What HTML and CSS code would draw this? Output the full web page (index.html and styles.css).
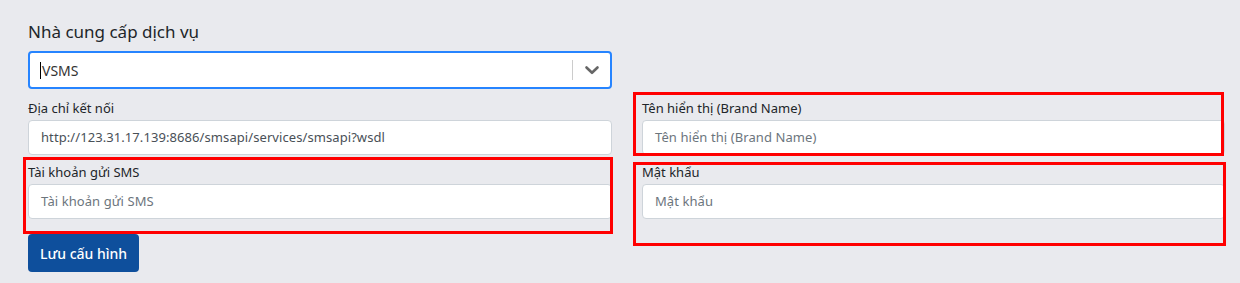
FILE: index.html
```html
<!DOCTYPE html>
<html>
<head>
<meta charset="UTF-8" />
<title>Cấu hình SMS</title>
<link rel="stylesheet" href="styles.css">
</head>
<body>
<div class="page">
  <div class="title">Nhà cung cấp dịch vụ</div>
  <div class="select">
    <div class="select-value"><span class="caret"></span>VSMS</div>
    <div class="select-sep"></div>
    <div class="select-arrow">
      <svg width="20" height="20" viewBox="0 0 20 20"><path d="M4.5 7.5 L10 12.8 L15.5 7.5" fill="none" stroke="#666" stroke-width="2.6" stroke-linecap="round" stroke-linejoin="round"/></svg>
    </div>
  </div>

  <div class="grid">
    <div class="field">
      <label>Địa chỉ kết nối</label>
      <div class="input">http://123.31.17.139:8686/smsapi/services/smsapi?wsdl</div>
    </div>
    <div class="field">
      <label>Tên hiển thị (Brand Name)</label>
      <div class="input placeholder">Tên hiển thị (Brand Name)</div>
    </div>
    <div class="field">
      <label>Tài khoản gửi SMS</label>
      <div class="input placeholder">Tài khoản gửi SMS</div>
    </div>
    <div class="field">
      <label>Mật khẩu</label>
      <div class="input placeholder">Mật khẩu</div>
    </div>
  </div>

  <button class="btn">Lưu cấu hình</button>

  <!-- red annotation boxes -->
  <div class="mark mark-account"></div>
  <div class="mark mark-brand"></div>
  <div class="mark mark-pass"></div>
</div>
</body>
</html>
```

FILE: styles.css
```css
body {
	margin:0;
	background-color:#e9eaee;
	font-family:"Noto Sans", "Open Sans", sans-serif;
	color:#212529;
}

.page
{
	position:relative;
	height:283px;
	padding:20px 0 0 28px;
	box-sizing:border-box;
}

.title
{
	font-size:17px;
	line-height:24px;
	margin-bottom:7px;
}

.select
{
	width:584px;
	height:38px;
	box-sizing:border-box;
	border:2px solid #2684ff;
	border-radius:4px;
	background:#fff;
	display:flex;
	align-items:center;
}

.select-value
{
	flex:1;
	padding-left:10px;
	font-size:14px;
	color:#333;
	display:flex;
	align-items:center;
}

.caret
{
	width:1px;
	height:17px;
	background:#000;
	margin-right:1px;
}

.select-sep
{
	width:1px;
	height:20px;
	background:#ccc;
}

.select-arrow
{
	width:37px;
	display:flex;
	justify-content:center;
	align-items:center;
}

.grid
{
	display:grid;
	grid-template-columns:584px 583px;
	column-gap:30px;
	row-gap:8px;
	margin-top:10px;
}

.field label
{
	display:block;
	font-size:13px;
	line-height:19px;
	margin-bottom:2px;
}

.input
{
	height:35px;
	box-sizing:border-box;
	border:1px solid #ced4da;
	border-radius:4px;
	background:#fff;
	padding:0 12px;
	font-size:13px;
	letter-spacing:0.08px;
	line-height:33px;
	color:#495057;
}

.placeholder
{
	color:#6c757d;
}

.btn
{
	margin-top:15px;
	height:38px;
	padding:0 12px;
	border:0;
	border-radius:4px;
	background:#0e4f9c;
	color:#fff;
	font-family:inherit;
	font-size:14px;
	font-weight:500;
}

.mark
{
	position:absolute;
	border:3px solid #ff0000;
	box-sizing:border-box;
}

.mark-account
{
	left:23px;
	top:157px;
	width:590px;
	height:77px;
}

.mark-brand
{
	left:633px;
	top:92px;
	width:591px;
	height:64px;
}

.mark-pass
{
	left:633px;
	top:162px;
	width:593px;
	height:84px;
}
```
